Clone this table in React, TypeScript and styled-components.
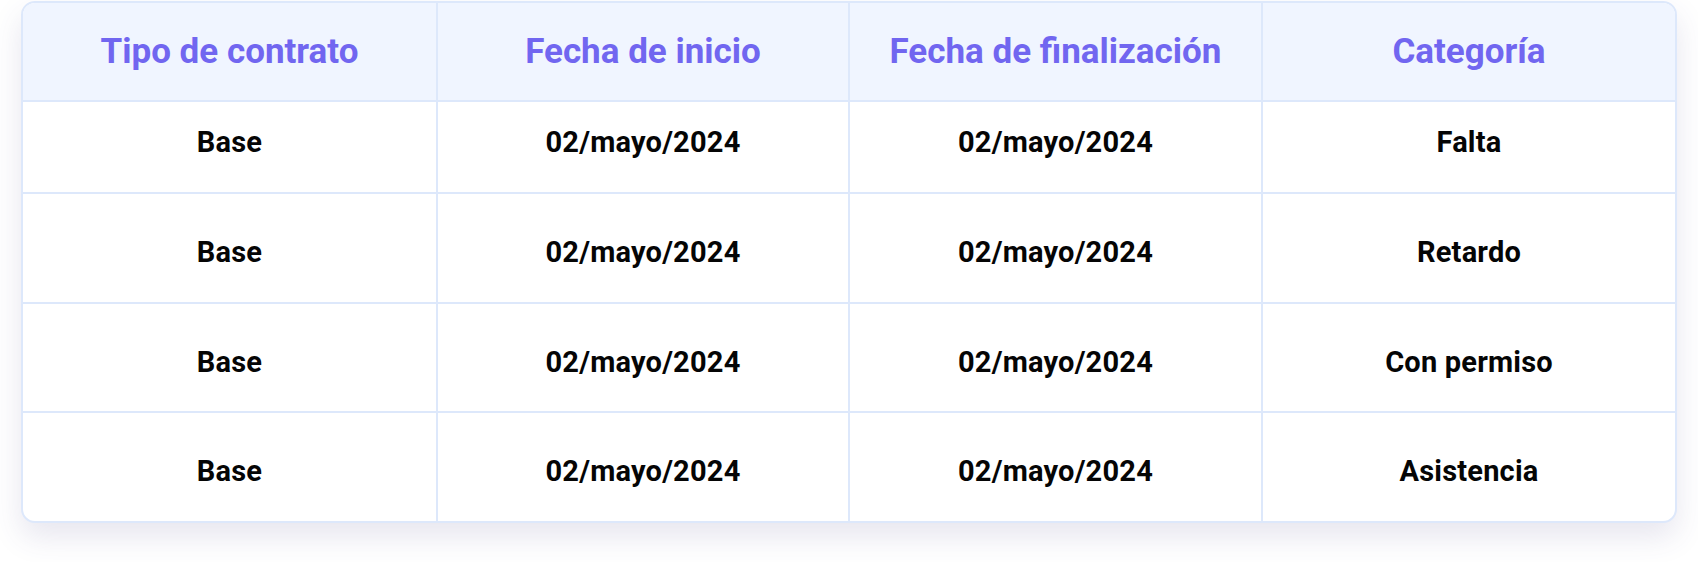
import React from 'react';
import styled, { createGlobalStyle } from 'styled-components';

const GlobalStyle = createGlobalStyle`
  body {
    margin: 0;
    background: #ffffff;
    font-family: Roboto, "Liberation Sans", Arial, sans-serif;
  }
`;

const Page = styled.div`
  padding: 1px 21px 40px 21px;
`;

const Card = styled.div`
  display: grid;
  grid-template-columns: 415px 412px 413px 1fr;
  grid-template-rows: 99px 92px 110px 109px 108px;
  background: #ffffff;
  border: 2px solid #dde8fb;
  border-radius: 14px;
  overflow: hidden;
  box-shadow: 0 14px 30px rgba(70, 60, 130, 0.13);
`;

const HeadCell = styled.div<{ $last?: boolean }>`
  display: flex;
  align-items: center;
  justify-content: center;
  background: #f0f5ff;
  color: #7166f0;
  font-size: 35px;
  font-weight: 700;
  border-right: ${(p) => (p.$last ? 'none' : '2px solid #dde8fb')};
  border-bottom: 2px solid #dde8fb;
`;

const Cell = styled.div<{ $last?: boolean; $bottom?: boolean; $first?: boolean }>`
  display: flex;
  align-items: center;
  justify-content: center;
  color: #050505;
  font-size: 29px;
  font-weight: 700;
  letter-spacing: 0.2px;
  padding: ${(p) => (p.$first ? '0 0 11px 0' : '8px 0 0 0')};
  border-right: ${(p) => (p.$last ? 'none' : '2px solid #dde8fb')};
  border-bottom: ${(p) => (p.$bottom ? 'none' : '2px solid #dde8fb')};
`;

const headers = ['Tipo de contrato', 'Fecha de inicio', 'Fecha de finalización', 'Categoría'];

const rows = [
  ['Base', '02/mayo/2024', '02/mayo/2024', 'Falta'],
  ['Base', '02/mayo/2024', '02/mayo/2024', 'Retardo'],
  ['Base', '02/mayo/2024', '02/mayo/2024', 'Con permiso'],
  ['Base', '02/mayo/2024', '02/mayo/2024', 'Asistencia'],
];

const App = () => {
  return (
    <>
      <GlobalStyle />
      <Page>
        <Card>
          {headers.map((h, i) => (
            <HeadCell key={h} $last={i === headers.length - 1}>
              {h}
            </HeadCell>
          ))}
          {rows.map((row, r) =>
            row.map((text, c) => (
              <Cell
                key={`${r}-${c}`}
                $last={c === row.length - 1}
                $bottom={r === rows.length - 1}
                $first={r === 0}
              >
                {text}
              </Cell>
            ))
          )}
        </Card>
      </Page>
    </>
  );
};

export default App;
